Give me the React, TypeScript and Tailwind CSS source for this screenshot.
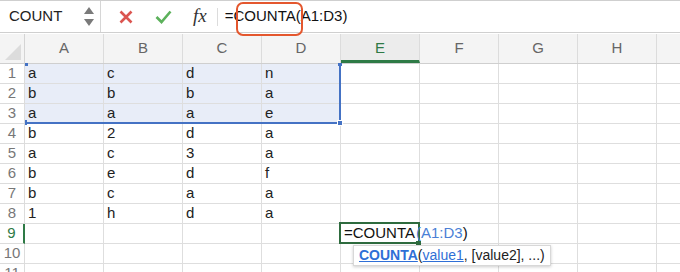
import React from "react";

const cols = ["A", "B", "C", "D", "E", "F", "G", "H", ""];
const data: string[][] = [
  ["a", "c", "d", "n"],
  ["b", "b", "b", "a"],
  ["a", "a", "a", "e"],
  ["b", "2", "d", "a"],
  ["a", "c", "3", "a"],
  ["b", "e", "d", "f"],
  ["b", "c", "a", "a"],
  ["1", "h", "d", "a"],
];

const font = { fontFamily: '"Liberation Sans", Arial, sans-serif' };

const Toolbar: React.FC = () => (
  <div className="relative flex h-[33px] border-t border-b border-[#cfcfcf] bg-white">
    <div className="flex w-[101px] items-center justify-between border-r border-[#d6d6d6] pl-[9px] pr-[6px]">
      <span className="text-[15px] text-[#222]">COUNT</span>
      <div className="flex flex-col gap-[5px] text-[#777]">
        <svg width="10" height="7" viewBox="0 0 10 7">
          <path d="M5 0 L10 7 L0 7 Z" fill="#7a7a7a" />
        </svg>
        <svg width="10" height="7" viewBox="0 0 10 7">
          <path d="M0 0 L10 0 L5 7 Z" fill="#7a7a7a" />
        </svg>
      </div>
    </div>
    <div className="flex items-center">
      <svg className="ml-[18px]" width="14" height="14" viewBox="0 0 14 14">
        <path d="M1.5 1.5 L12.5 12.5 M12.5 1.5 L1.5 12.5" stroke="#db5550" strokeWidth="2.6" />
      </svg>
      <svg className="ml-[22px]" width="17" height="14" viewBox="0 0 17 14">
        <path d="M1.5 7 L6.5 12 L15.5 1.5" stroke="#5cb15b" strokeWidth="2.6" fill="none" />
      </svg>
      <span
        className="ml-[21px] text-[19px] italic text-[#333]"
        style={{ fontFamily: '"Liberation Serif", "Times New Roman", serif' }}
      >
        fx
      </span>
      <div className="ml-[10px] h-[18px] w-px bg-[#dcdcdc]" />
      <span className="ml-[7px] text-[15px] text-[#111]">=COUNTA(A1:D3)</span>
    </div>
    <div className="absolute left-[236px] top-[1px] h-[34px] w-[67px] rounded-[7px] border-2 border-[#e4572e]" />
  </div>
);

const Header: React.FC = () => (
  <div className="mt-px flex h-[30px] border-b border-[#cfcfcf] bg-[#f4f4f4]">
    <div className="relative w-[25px] shrink-0 border-r border-[#d4d4d4]">
      <svg className="absolute bottom-[3px] right-[3px]" width="16" height="16" viewBox="0 0 16 16">
        <path d="M16 0 L16 16 L0 16 Z" fill="#dcdcdc" />
      </svg>
    </div>
    {cols.map((c) => (
      <div
        key={c || "I"}
        className={`flex w-[79px] shrink-0 items-center justify-center border-r border-[#dcdcdc] text-[15px] ${
          c === "E" ? "border-b-[3px] border-b-[#2e7a46] bg-[#ececec] pt-[3px] text-[#2e7a46]" : "text-[#666]"
        }`}
      >
        {c}
      </div>
    ))}
  </div>
);

export default function App() {
  const rows = Array.from({ length: 11 }, (_, i) => i + 1);
  return (
    <div className="relative h-[272px] w-[680px] overflow-hidden bg-white" style={font}>
      <Toolbar />
      <Header />
      {rows.map((r) => (
        <div key={r} className="flex h-[20px]">
          <div
            className={`flex w-[25px] shrink-0 items-center justify-center border-b border-r text-[15px] ${
              r === 9
                ? "border-r-2 border-b-[#dcdcdc] border-r-[#2e7a46] text-[#2e7a46]"
                : "border-[#dcdcdc] text-[#777]"
            }`}
          >
            {r}
          </div>
          {cols.map((c, ci) => {
            const sel = r <= 3 && ci < 4;
            const v = data[r - 1]?.[ci] ?? "";
            return (
              <div
                key={ci}
                className={`flex w-[79px] shrink-0 items-center border-b border-r border-[#dedede] pl-[3px] text-[15px] text-[#222] ${
                  sel ? "bg-[#e8edf8]" : "bg-white"
                }`}
              >
                {v}
              </div>
            );
          })}
        </div>
      ))}

      {/* selection A1:D3 */}
      <div className="absolute left-[25px] top-[122px] h-[2px] w-[317px] bg-[#4472c4]" />
      <div className="absolute left-[339px] top-[64px] h-[60px] w-[2px] bg-[#4472c4]" />
      <div className="absolute left-[25px] top-[63px] h-[3px] w-[3px] bg-[#4472c4]" />
      <div className="absolute left-[338px] top-[63px] h-[3px] w-[4px] bg-[#4472c4]" />
      <div className="absolute left-[25px] top-[120px] h-[5px] w-[2px] bg-[#4472c4]" />
      <div className="absolute left-[337px] top-[120px] h-[6px] w-[6px] border border-white bg-[#4472c4]" />

      {/* active cell E9 */}
      <div className="absolute left-[339px] top-[222px] flex h-[22px] w-[81px] items-center border-2 border-[#2e6b3e] pl-[3px] text-[15px] whitespace-nowrap text-[#111]">
        <span>=COUNTA</span>
        <span className="h-[16px] w-px bg-[#111]" />
        <span className="ml-px text-[#4a7fd6]">(A1:D3</span>
        <span>)</span>
      </div>
      <div className="absolute left-[416px] top-[241px] h-[4px] w-[5px] bg-[#2e6b3e]" />

      {/* tooltip */}
      <div className="absolute left-[353px] top-[245px] flex h-[21px] items-center border border-[#d8d8d8] bg-white px-[5px] text-[14px] text-[#222] shadow-[0_1px_3px_rgba(0,0,0,0.2)]">
        <span className="font-bold text-[#2f6fd6] underline">COUNTA</span>
        <span>(</span>
        <span className="text-[#2f6fd6] underline">value1</span>
        <span>, [value2], ...)</span>
      </div>
    </div>
  );
}
